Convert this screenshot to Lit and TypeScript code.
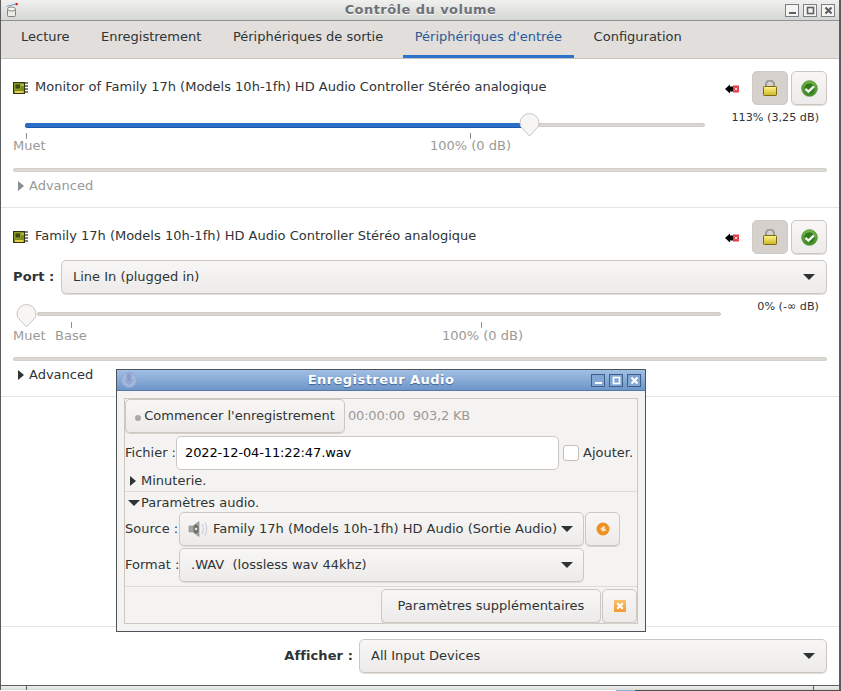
import { LitElement, html, css, svg } from "lit";
import { customElement } from "lit/decorators.js";

const board = html`<svg class="board" width="16" height="14" viewBox="0 0 16 14">
  <rect x="0.5" y="1.5" width="11" height="11" fill="#7c8a1e" stroke="#2e3310"/>
  <rect x="2" y="3" width="5.5" height="5" fill="#3d4a12" stroke="#b5c23c" stroke-width="0.6"/>
  <rect x="8.5" y="3" width="2" height="2" fill="#c7cf5a"/>
  <rect x="2" y="10" width="8.5" height="2" fill="#e5cf4a"/>
  <path d="M12 2h3M12 5h3M12 8h3M12 11h3" stroke="#555" stroke-width="1.4"/>
</svg>`;
const mute = html`<svg width="14" height="10" viewBox="0 0 14 10">
  <path d="M0 5l5-4.5v2h3v5h-3v2z" fill="#000"/>
  <rect x="8" y="1.5" width="6" height="7" fill="#e23f4a"/>
  <path d="M9.7 3.7l2.6 2.6M12.3 3.7l-2.6 2.6" stroke="#f7d8da" stroke-width="1"/>
</svg>`;
const lock = html`<svg width="14" height="16" viewBox="0 0 14 16">
  <defs><linearGradient id="lk" x1="0" y1="0" x2="0" y2="1"><stop offset="0" stop-color="#fdf68f"/><stop offset="1" stop-color="#d0b422"/></linearGradient></defs>
  <path d="M3 6.5V4.5a4 4 0 0 1 8 0V6.5" fill="none" stroke="#9a9a96" stroke-width="2"/>
  <rect x="0.5" y="6.5" width="13" height="9" rx="0.8" fill="url(#lk)" stroke="#7c6a12"/>
</svg>`;
const check = html`<svg width="17" height="17" viewBox="0 0 17 17">
  <defs><linearGradient id="ck" x1="0" y1="0" x2="0" y2="1"><stop offset="0" stop-color="#79b84a"/><stop offset="1" stop-color="#3f8a24"/></linearGradient></defs>
  <circle cx="8.5" cy="8.5" r="7.8" fill="url(#ck)" stroke="#4a8c2c" stroke-width="0.8"/>
  <circle cx="8.5" cy="8.5" r="5.2" fill="#2f7a1f"/>
  <path d="M4.4 8.8l3 2.9 5.6-5.4" fill="none" stroke="#f4f7ef" stroke-width="2.3"/>
</svg>`;
const speaker = html`<svg width="24" height="18" viewBox="0 0 24 18">
  <path d="M1 6h4l6-4.5v15L5 12H1z" fill="#a5a5a2" stroke="#8b8b88" stroke-width="0.6"/>
  <ellipse cx="8" cy="9" rx="2.6" ry="4.6" fill="#6f6f6d"/>
  <circle cx="8" cy="9" r="1.3" fill="#e6e6e4"/>
  <path d="M14 4q2.5 5 0 10M17 2.5q3.5 6.5 0 13" fill="none" stroke="#c7cfdc" stroke-width="1.2"/>
</svg>`;
const orangeDot = html`<svg width="14" height="14" viewBox="0 0 14 14">
  <circle cx="7" cy="7" r="6.5" fill="#ef8f22"/>
  <path d="M4.2 6.6l4.6-3v3l2 1.6-4.2 1.6z" fill="#f8e2c4"/>
</svg>`;
const orangeX = html`<svg width="12" height="12" viewBox="0 0 12 12">
  <defs><linearGradient id="ox" x1="0" y1="0" x2="0" y2="1"><stop offset="0" stop-color="#f9c070"/><stop offset="1" stop-color="#f29a2e"/></linearGradient></defs>
  <rect width="12" height="12" fill="url(#ox)"/>
  <path d="M3.2 3.2l5.6 5.6M8.8 3.2l-5.6 5.6" stroke="#fff" stroke-width="2.1"/>
</svg>`;
const mic = html`<svg width="16" height="16" viewBox="0 0 16 16">
  <circle cx="8" cy="8" r="7.5" fill="#a3b9dc" stroke="#8ea6cf"/>
  <rect x="5.6" y="1.5" width="4.8" height="8.5" rx="2.4" fill="#8c9ccf"/>
  <path d="M4.5 7.5a3.5 4 0 0 0 7 0M8 11.5v2.5" fill="none" stroke="#8c9ccf"/>
</svg>`;
const appIcon = html`<svg width="13" height="14" viewBox="0 0 13 14">
  <path d="M0.5 3.5L9.5 1" stroke="#6e9ac8" stroke-width="1"/>
  <rect x="9.5" y="0" width="2.2" height="2.2" fill="#d02020"/>
  <path d="M1.5 6v6.5q0 1 1 1h6q1 0 1-1V6" fill="#ecebe8" stroke="#85857f"/>
  <ellipse cx="5.5" cy="6" rx="4" ry="2" fill="#f6f6f4" stroke="#85857f"/>
</svg>`;
const winBtn = (k: string) => html`<span class="wb">${
  k === "min" ? svg`<svg width="9" height="9" viewBox="0 0 9 9"><rect x="1" y="6" width="7" height="2" fill="currentColor"/></svg>`
  : k === "max" ? svg`<svg width="9" height="9" viewBox="0 0 9 9"><rect x="1.5" y="1.5" width="6" height="6" fill="none" stroke="currentColor" stroke-width="1.6"/></svg>`
  : svg`<svg width="9" height="9" viewBox="0 0 9 9"><path d="M1.5 1.5l6 6M7.5 1.5l-6 6" stroke="currentColor" stroke-width="2.2"/></svg>`
}</span>`;

@customElement("app-root")
export class AppRoot extends LitElement {
  static styles = css`
    :host { display: block; position: relative; width: 841px; height: 691px; overflow: hidden; background: #fff;
      font-family: "DejaVu Sans", sans-serif; font-size: 13px; color: #2e3436; line-height: 16px; }
    .main { height: 690px; display: flex; flex-direction: column; border-left: 1px solid #5a5c60; border-right: 2px solid #5a5c60; box-sizing: border-box; }
    .under { height: 1px; background: linear-gradient(90deg, #fff 616px, #8fb4e4 616px, #8fb4e4 635px, #4a4c50 635px); }
    .titlebar { flex: 0 0 21px; display: grid; grid-template-columns: 1fr auto 1fr; align-items: center; padding: 0 4px 0 5px; box-sizing: border-box;
      background: linear-gradient(#f0f0ee, #d6d6d3); border-bottom: 1px solid #8d9197; }
    .ttl { text-align: center; font-weight: 700; font-size: 13px; letter-spacing: 0.45px; white-space: nowrap; }
    .titlebar .ttl { color: #6d7178; text-shadow: 0 1px 0 #fff; }
    .wbs { display: flex; gap: 4px; justify-content: flex-end; }
    .wb { width: 14px; height: 13px; box-sizing: border-box; border: 1px solid #7c8086; display: flex; align-items: center; justify-content: center; color: #5d6167; background: #f4f4f2; }
    .tabs { flex: 0 0 37px; box-sizing: border-box; display: flex; padding-left: 4px; background: #e1dedb; border-bottom: 1px solid #c6c2bd; }
    .tab { margin: 0 3.75px; padding: 8px 12px 0; box-sizing: border-box; height: 36px; white-space: nowrap; }
    .tab:first-child { margin-left: 4px; }
    .tab.on { border-bottom: 3px solid #2c74c9; height: 37px; color: #2a5c96; }
    .sec { padding: 11px 12px 0; box-sizing: border-box; border-bottom: 1px solid #e7e5e3; }
    .s1 { height: 149px; }
    .s2 { height: 189px; }
    .hdr { display: flex; align-items: center; height: 36px; }
    .board { margin-right: 6px; flex: none; }
    .hname { flex: 1; white-space: nowrap; padding-bottom: 3px; }
    .mute { display: flex; margin: 0 10px 0 0; padding-top: 2px; }
    .tb { width: 36px; height: 34px; box-sizing: border-box; border: 1px solid #cdc7c2; border-radius: 5px; background: linear-gradient(#f8f7f6, #ecebe9); display: flex; align-items: center; justify-content: center; margin-left: 3px; box-shadow: 0 1px 0 #e0dcd8; }
    .tb.on { background: #d6d1cd; border-color: #cfcac5; box-shadow: none; }
    .pct { text-align: right; font-size: 11.2px; padding-right: 8px; line-height: 14px; height: 14px; margin-top: 5px; margin-bottom: -5px; }
    .pct.p2 { margin-top: 6px; }
    .slider { position: relative; height: 48px; }
    .track { position: absolute; height: 4px; border-radius: 2px; background: #d9d6d1; border: 1px solid #cfcbc6; box-sizing: border-box; top: 3px; }
    .fill { position: absolute; height: 4px; border-radius: 2px; background: #2a6fc9; box-shadow: 0 1px 0 #1c5aa8; top: 3px; }
    .thumb { position: absolute; }
    .tick { position: absolute; width: 1px; height: 6px; background: #8f8f8f; top: 13px; }
    .lab { position: absolute; color: #9a9a97; white-space: nowrap; top: 18px; }
    .s2 .lab { top: 19px; }
    .sep { height: 4px; border-radius: 2px; background: #dcd9d5; border: 1px solid #d2cec9; box-sizing: border-box; }
    .adv { display: flex; align-items: center; gap: 5px; padding-left: 5px; height: 16px; margin-top: 6px; }
    .adv.off { color: #97999a; }
    .tri { width: 0; height: 0; border-left: 6px solid currentColor; border-top: 5px solid transparent; border-bottom: 5px solid transparent; }
    .adv.off .tri { color: #8b8d8e; }
    .portrow { display: flex; align-items: center; margin-top: 5px; }
    .b { font-weight: 700; white-space: nowrap; letter-spacing: 0.1px; }
    .portrow .b { width: 48px; flex: none; }
    .combo { flex: 1; display: flex; align-items: center; justify-content: space-between; box-sizing: border-box; border: 1px solid #cdc7c2; border-radius: 5px;
      background: linear-gradient(#f8f7f6, #ecebe9); padding: 0 11px 1px; height: 34px; white-space: nowrap; box-shadow: 0 1px 0 #e0dcd8; }
    .caret { width: 0; height: 0; flex: none; border-top: 6px solid #2e3436; border-left: 6.5px solid transparent; border-right: 6.5px solid transparent; }
    .spacer { flex: 1; border-bottom: 1px solid #e7e5e3; }
    .foot { flex: 0 0 59px; display: flex; align-items: center; justify-content: flex-end; padding: 0 12px 0 0; box-sizing: border-box; border-bottom: 1px solid #5a5c60; }
    .foot .b { margin-right: 6px; }
    .foot .combo { flex: 0 0 468px; }
    .grip { flex: 0 0 4px; box-sizing: border-box; background: linear-gradient(#f0f0ee, #d8d8d5); display: flex; justify-content: space-between; }
    .grip i { width: 25px; border-right: 1px solid #5a5c60; }
    .grip i:last-child { border-right: 0; border-left: 1px solid #5a5c60; }

    .dlg { position: absolute; left: 116px; top: 369px; width: 530px; height: 263px; box-sizing: border-box; border: 1px solid #4d5258; background: #f5f3f1; display: flex; flex-direction: column; }
    .dbar { flex: 0 0 21px; display: grid; grid-template-columns: 1fr auto 1fr; align-items: center; padding: 0 4px 0 4px; box-sizing: border-box; background: linear-gradient(#a2bfe4, #6d96c8); border-bottom: 1px solid #557aa8; }
    .dbar .ttl { color: #fff; text-shadow: 0 1px 1px #3f5f8f; }
    .dbar .wb { background: #83a6d4; color: #fff; border-color: #3e5f8c; }
    .dbody { margin: 7px; border: 1px solid #ccc7c1; flex: 1; display: flex; flex-direction: column; }
    .drow { display: flex; align-items: center; white-space: nowrap; }
    .mt1 { margin-top: 1px; }
    .mt2 { margin-top: 2px; }
    .mt3 { margin-top: 3px; }
    .mt4 { margin-top: 4px; }
    .end { justify-content: flex-end; }
    .btn { box-sizing: border-box; border: 1px solid #cdc7c2; border-radius: 5px; background: linear-gradient(#f8f7f6, #ecebe9); display: flex; align-items: center; justify-content: center; height: 34px; white-space: nowrap; box-shadow: 0 1px 0 #d6d1cc; }
    .rec { width: 220px; }
    .extra { width: 220px; }
    .square { width: 35px; margin-left: 1px; }
    .dot { width: 6px; height: 6px; border-radius: 50%; background: #a9a9a6; margin: 3px 3px 0 0; }
    .gray { color: #9a9a97; margin-left: 3px; display: flex; gap: 8px; letter-spacing: -0.2px; }
    .flab { width: 51px; flex: none; }
    .entry { width: 383px; height: 34px; box-sizing: border-box; border: 1px solid #cdc7c2; border-radius: 5px; background: #fff; display: flex; align-items: center; padding-left: 8px; color: #000; margin-right: 4px; letter-spacing: -0.13px; }
    .cb { width: 16px; height: 16px; box-sizing: border-box; border: 1px solid #c4bfba; border-radius: 3px; background: #fff; margin-right: 4px; }
    .exp { display: flex; align-items: center; gap: 5px; height: 16px; padding-left: 5px; }
    .exp.open { padding-left: 3px; gap: 1px; }
    .rule { height: 1px; background: #dedbd7; }
    .combo.d { flex: none; width: 405px; padding: 0 10px 1px 8px; }
    .combo .in { display: flex; align-items: center; gap: 1px; }
    .fmt { padding-left: 3px; }
    .lbl { width: 54px; flex: none; }
    .tri-d { width: 0; height: 0; border-top: 6px solid currentColor; border-left: 6px solid transparent; border-right: 6px solid transparent; }
  `;

  sliderOne() {
    return html`<div class="slider">
      <div class="track" style="left:12px;width:680px"></div>
      <div class="fill" style="left:12px;width:504px"></div>
      ${this.thumb(506, -7)}
      <div class="tick" style="left:13px"></div>
      <div class="lab" style="left:0">Muet</div>
      <div class="tick" style="left:457px"></div>
      <div class="lab" style="left:417px">100% (0 dB)</div>
    </div>`;
  }
  sliderTwo() {
    return html`<div class="slider">
      <div class="track" style="left:24px;width:684px"></div>
      ${this.thumb(3, -5)}
      <div class="tick" style="left:58px"></div>
      <div class="lab" style="left:0">Muet</div>
      <div class="lab" style="left:42px">Base</div>
      <div class="tick" style="left:468px"></div>
      <div class="lab" style="left:429px">100% (0 dB)</div>
    </div>`;
  }
  thumb(x: number, y: number) {
    return html`<svg class="thumb" style="left:${x}px;top:${y}px" width="21" height="25" viewBox="0 0 21 25">
      <path d="M1 10a9.5 9.5 0 0 1 19 0q0 4-3 6l-6.5 7-6.5-7q-3-2-3-6z" fill="#f7f6f5" stroke="#c9c5c0"/>
    </svg>`;
  }

  render() {
    return html`
    <div class="main">
      <div class="titlebar">
        ${appIcon}
        <div class="ttl">Contrôle du volume</div>
        <div class="wbs">${winBtn("min")}${winBtn("max")}${winBtn("close")}</div>
      </div>
      <div class="tabs">
        <div class="tab">Lecture</div>
        <div class="tab">Enregistrement</div>
        <div class="tab">Périphériques de sortie</div>
        <div class="tab on">Périphériques d'entrée</div>
        <div class="tab">Configuration</div>
      </div>
      <div class="sec s1">
        <div class="hdr">
          ${board}<div class="hname">Monitor of Family 17h (Models 10h-1fh) HD Audio Controller Stéréo analogique</div>
          <div class="mute">${mute}</div>
          <div class="tb on">${lock}</div><div class="tb">${check}</div>
        </div>
        <div class="pct">113% (3,25 dB)</div>
        ${this.sliderOne()}
        <div class="sep"></div>
        <div class="adv off"><span class="tri"></span>Advanced</div>
      </div>
      <div class="sec s2">
        <div class="hdr">
          ${board}<div class="hname">Family 17h (Models 10h-1fh) HD Audio Controller Stéréo analogique</div>
          <div class="mute">${mute}</div>
          <div class="tb on">${lock}</div><div class="tb">${check}</div>
        </div>
        <div class="portrow"><span class="b">Port :</span>
          <div class="combo"><span>Line In (plugged in)</span><span class="caret"></span></div></div>
        <div class="pct p2">0% (-∞ dB)</div>
        ${this.sliderTwo()}
        <div class="sep"></div>
        <div class="adv"><span class="tri"></span>Advanced</div>
      </div>
      <div class="spacer"></div>
      <div class="foot"><span class="b">Afficher :</span>
        <div class="combo"><span>All Input Devices</span><span class="caret"></span></div></div>
      <div class="grip"><i></i><i></i></div>
    </div>
    <div class="under"></div>

    <div class="dlg">
      <div class="dbar">
        ${mic}
        <div class="ttl">Enregistreur Audio</div>
        <div class="wbs">${winBtn("min")}${winBtn("max")}${winBtn("close")}</div>
      </div>
      <div class="dbody">
        <div class="drow"><div class="btn rec"><span class="dot"></span>Commencer l'enregistrement</div><span class="gray"><span>00:00:00</span><span>903,2 KB</span></span></div>
        <div class="drow mt3"><span class="flab">Fichier :</span><div class="entry">2022-12-04-11:22:47.wav</div><span class="cb"></span><span>Ajouter.</span></div>
        <div class="exp mt3"><span class="tri"></span>Minuterie.</div>
        <div class="rule mt2"></div>
        <div class="exp open mt3"><span class="tri-d"></span>Paramètres audio.</div>
        <div class="drow mt1"><span class="lbl">Source :</span>
          <div class="combo d"><span class="in">${speaker}Family 17h (Models 10h-1fh) HD Audio (Sortie Audio)</span><span class="caret"></span></div>
          <div class="btn square">${orangeDot}</div></div>
        <div class="drow mt2"><span class="lbl">Format :</span>
          <div class="combo d"><span class="fmt">.WAV&nbsp; (lossless wav 44khz)</span><span class="caret"></span></div></div>
        <div class="rule mt4"></div>
        <div class="drow mt2 end">
          <div class="btn extra">Paramètres supplémentaires</div>
          <div class="btn square">${orangeX}</div></div>
      </div>
    </div>`;
  }
}
